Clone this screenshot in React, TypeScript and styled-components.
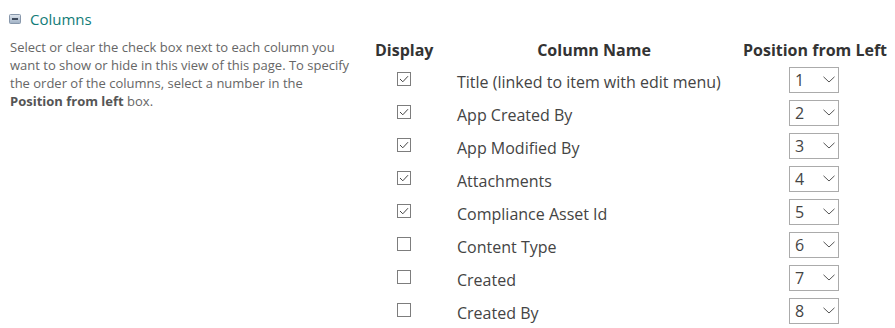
import React from "react";
import styled, { createGlobalStyle } from "styled-components";

const GlobalStyle = createGlobalStyle`
  html, body {
    margin: 0;
    padding: 0;
    background: #fff;
  }
  body {
    font-family: "Open Sans", "Noto Sans", Arial, sans-serif;
    color: #444;
  }
`;

const columns = [
  { name: "Title (linked to item with edit menu)", checked: true },
  { name: "App Created By", checked: true },
  { name: "App Modified By", checked: true },
  { name: "Attachments", checked: true },
  { name: "Compliance Asset Id", checked: true },
  { name: "Content Type", checked: false },
  { name: "Created", checked: false },
  { name: "Created By", checked: false },
];

const Page = styled.div`
  width: 895px;
  height: 328px;
  overflow: hidden;
  display: flex;
  flex-direction: column;
`;

const SectionHeader = styled.div`
  display: flex;
  align-items: center;
  gap: 9px;
  padding: 8px 0 0 9px;
  height: 22px;
`;

const SectionTitle = styled.span`
  font-size: 15px;
  color: #127c78;
  line-height: 22px;
`;

const Body = styled.div`
  display: flex;
  padding-top: 8px;
`;

const Description = styled.p`
  margin: 0;
  flex-shrink: 0;
  width: 342px;
  padding-left: 10px;
  font-size: 13px;
  line-height: 18px;
  color: #666;
  b {
    font-weight: 700;
    color: #555;
  }
`;

const Table = styled.div`
  flex-shrink: 0;
  margin-left: 23px;
  display: grid;
  grid-template-columns: 58px 286px 142px;
  grid-template-rows: 25px repeat(8, 33px);
  column-gap: 12px;
`;

const Head = styled.div<{ $pad?: boolean }>`
  font-size: 16px;
  font-weight: 700;
  color: #333;
  text-align: center;
  white-space: nowrap;
  line-height: 24px;
  padding-left: ${(p) => (p.$pad ? "12px" : "0")};
`;

const Cell = styled.div<{ $center?: boolean }>`
  display: flex;
  align-items: center;
  justify-content: ${(p) => (p.$center ? "center" : "flex-start")};
  padding-left: ${(p) => (p.$center ? "0" : "12px")};
  padding-top: ${(p) => (p.$center ? "0" : "4px")};
  font-size: 16px;
  color: #444;
  white-space: nowrap;
`;

const Box = styled.span`
  width: 14px;
  height: 14px;
  box-sizing: border-box;
  border: 1px solid #7d7d7d;
  background: #fff;
  display: flex;
  align-items: center;
  justify-content: center;
  margin-top: -2px;
`;

const Select = styled.div`
  width: 50px;
  height: 26px;
  box-sizing: border-box;
  border: 1px solid #ababab;
  display: flex;
  align-items: center;
  justify-content: space-between;
  padding: 0 3px 0 5px;
  font-size: 16px;
  color: #444;
  background: #fff;
`;

const CollapseIcon = () => (
  <svg width="12" height="10" viewBox="0 0 12 10">
    <defs>
      <linearGradient id="cg" x1="0" y1="0" x2="0" y2="1">
        <stop offset="0" stopColor="#dfe6ee" />
        <stop offset="1" stopColor="#9fb0c4" />
      </linearGradient>
    </defs>
    <rect x="0.5" y="0.5" width="11" height="9" rx="1" fill="url(#cg)" stroke="#8797ab" />
    <rect x="3" y="4" width="6" height="2" fill="#3d4a5c" />
  </svg>
);

const Check = () => (
  <svg width="10" height="8" viewBox="0 0 10 8">
    <path d="M1 4 L3.8 6.8 L9 1.2" fill="none" stroke="#444" strokeWidth="1" />
  </svg>
);

const Chevron = () => (
  <svg width="12" height="7" viewBox="0 0 12 7">
    <path d="M0.5 0.8 L6 6 L11.5 0.8" fill="none" stroke="#555" strokeWidth="1" />
  </svg>
);

export default function App() {
  return (
    <Page>
      <GlobalStyle />
      <SectionHeader>
        <CollapseIcon />
        <SectionTitle>Columns</SectionTitle>
      </SectionHeader>
      <Body>
        <Description>
          Select or clear the check box next to each column you want to show or
          hide in this view of this page. To specify the order of the columns,
          select a number in the <b>Position from left</b> box.
        </Description>
        <Table>
          <Head>Display</Head>
          <Head $pad>Column Name</Head>
          <Head>Position from Left</Head>
          {columns.map((c, i) => (
            <React.Fragment key={c.name}>
              <Cell $center>
                <Box>{c.checked && <Check />}</Box>
              </Cell>
              <Cell>{c.name}</Cell>
              <Cell $center>
                <Select>
                  <span>{i + 1}</span>
                  <Chevron />
                </Select>
              </Cell>
            </React.Fragment>
          ))}
        </Table>
      </Body>
    </Page>
  );
}
